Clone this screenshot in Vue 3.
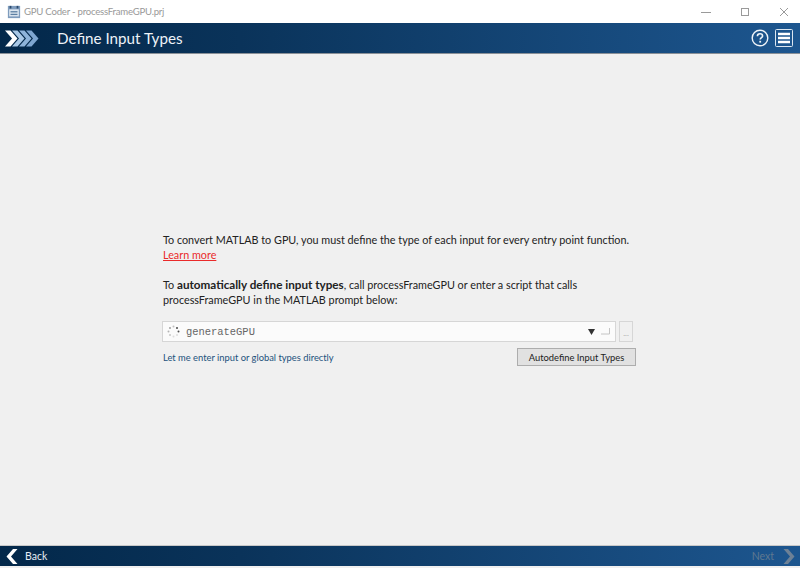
<script setup>
const logoChevrons = [
  { x: 21, fill: '#7ea6d0' },
  { x: 14, fill: '#8fb4da' },
  { x: 7, fill: '#a9c8e6' },
  { x: 0, fill: '#ffffff' },
]
const spinnerDots = [
  { x: 7.5, y: 1.5, o: 0.3 },
  { x: 11, y: 3, o: 0.9 },
  { x: 12.5, y: 6.5, o: 0.85 },
  { x: 11, y: 10, o: 0.15 },
  { x: 7.5, y: 11.5, o: 0.15 },
  { x: 4, y: 10, o: 0.25 },
  { x: 2.5, y: 6.5, o: 0.35 },
  { x: 4, y: 3, o: 0.45 },
]
</script>

<template>
  <div class="window">
    <div class="titlebar">
      <div class="title-left">
        <svg class="app-icon" width="14" height="14" viewBox="0 0 16 16">
          <rect x="1" y="1" width="14" height="14" fill="#7f9cbd" />
          <rect x="3" y="1" width="2" height="3" fill="#2c4a6e" />
          <rect x="11" y="1" width="2" height="3" fill="#2c4a6e" />
          <rect x="2.5" y="5" width="11" height="8" fill="#dfe8f1" />
          <rect x="4" y="7" width="8" height="1.5" fill="#5d7fa3" />
          <rect x="4" y="10" width="8" height="1.5" fill="#5d7fa3" />
        </svg>
        <span class="title-text">GPU Coder - processFrameGPU.prj</span>
      </div>
      <div class="win-controls">
        <svg width="10" height="10" viewBox="0 0 10 10"><path d="M0 5.5H10" stroke="#9a9a9a" /></svg>
        <svg width="10" height="10" viewBox="0 0 10 10"><rect x="1.5" y="1.5" width="7" height="7" fill="none" stroke="#9a9a9a" /></svg>
        <svg width="10" height="10" viewBox="0 0 10 10"><path d="M1 1L9 9M9 1L1 9" stroke="#9a9a9a" /></svg>
      </div>
    </div>

    <header class="banner">
      <div class="banner-left">
        <svg class="logo" width="34" height="17" viewBox="0 0 34 17">
          <path
            v-for="c in logoChevrons"
            :key="c.x"
            :transform="`translate(${c.x} 0)`"
            :fill="c.fill"
            d="M0 .5H5.5L12.5 8.5L5.5 16.5H0L7 8.5Z"
          />
        </svg>
        <h1 class="banner-title">Define Input Types</h1>
      </div>
      <div class="banner-right">
        <svg width="18" height="18" viewBox="0 0 18 18">
          <circle cx="9" cy="9" r="7.8" fill="none" stroke="#eef3f8" stroke-width="1.4" />
          <path d="M6.4 7.2C6.4 5.6 7.6 4.8 9 4.8C10.5 4.8 11.6 5.7 11.6 7C11.6 8.6 9.2 8.8 9.2 10.6" fill="none" stroke="#eef3f8" stroke-width="1.6" />
          <rect x="8.3" y="11.8" width="1.8" height="1.8" fill="#eef3f8" />
        </svg>
        <svg width="18" height="18" viewBox="0 0 18 18">
          <rect x="0.5" y="0.5" width="17" height="17" rx="1" fill="none" stroke="#dce6f0" />
          <path d="M3 5H15M3 9H15M3 13H15" stroke="#fff" stroke-width="2.4" />
        </svg>
      </div>
    </header>

    <main class="content">
      <div class="panel">
        <p class="para">
          To convert MATLAB to GPU, you must define the type of each input for every entry point function.<br />
          <a class="learn">Learn more</a>
        </p>
        <p class="para second">
          To <b>automatically define input types</b>, call processFrameGPU or enter a script that calls<br />
          processFrameGPU in the MATLAB prompt below:
        </p>
        <div class="prompt-row">
          <div class="prompt">
            <svg class="spinner" width="15" height="13" viewBox="0 0 15 13">
              <circle v-for="(d, i) in spinnerDots" :key="i" :cx="d.x" :cy="d.y" r="1" fill="#333" :opacity="d.o" />
            </svg>
            <span class="prompt-text">generateGPU</span>
            <svg class="arrow" width="7" height="6" viewBox="0 0 7 6"><path d="M0 0H7L3.5 6Z" fill="#333" /></svg>
            <svg class="enter" width="9" height="7" viewBox="0 0 9 7"><path d="M0 6H8.5V0" fill="none" stroke="#c4c4c4" /></svg>
          </div>
          <div class="browse">...</div>
        </div>
        <div class="action-row">
          <a class="manual">Let me enter input or global types directly</a>
          <button class="auto">Autodefine Input Types</button>
        </div>
      </div>
    </main>

    <footer class="footer">
      <div class="nav">
        <svg width="12" height="15" viewBox="0 0 12 15"><path d="M7 0H11.5L5 7.5L11.5 15H7L.5 7.5Z" fill="#fff" /></svg>
        <span class="back">Back</span>
      </div>
      <div class="nav">
        <span class="next">Next</span>
        <svg width="12" height="15" viewBox="0 0 12 15"><path d="M.5 0H5L11.5 7.5L5 15H.5L7 7.5Z" fill="#6d8196" /></svg>
      </div>
    </footer>
  </div>
</template>

<style>
html, body { margin: 0; background: #f0f0f0; }
</style>

<style scoped>
.window {
  width: 800px;
  height: 568px;
  display: flex;
  flex-direction: column;
  font-family: Lato, "Open Sans", sans-serif;
  background: #f0f0f0;
  overflow: hidden;
}
.titlebar {
  height: 23px;
  background: #fff;
  display: flex;
  align-items: center;
  justify-content: space-between;
  padding: 0 8px 0 7px;
}
.title-left { display: flex; align-items: center; gap: 3px; }
.title-text { font-size: 9.6px; letter-spacing: -0.23px; color: #999; }
.win-controls { display: flex; gap: 29px; align-items: center; margin-right: 3px; }
.banner {
  height: 30px;
  background: linear-gradient(90deg, #03284a 0%, #0a335a 30%, #1d568f 100%);
  display: flex;
  align-items: center;
  justify-content: space-between;
  padding: 0 7px 0 5px;
  border-bottom: 1px solid #8a9097;
}
.banner-left { display: flex; align-items: center; gap: 18px; }
.banner-title { margin: 0; font-size: 15.2px; font-weight: 400; color: #eef3f8; }
.banner-right { display: flex; align-items: center; gap: 6px; }
.content {
  flex: 1;
  display: flex;
  flex-direction: column;
  padding: 178px 0 0 163px;
  border-bottom: 1px solid #c8c8c8;
}
.panel { width: 473px; }
.para { margin: 0; font-size: 10.8px; line-height: 15px; color: #222; white-space: nowrap; }
.para b { font-size: 11.7px; line-height: 1; }
.second { margin-top: 15px; }
.learn { color: #ea2a2a; text-decoration: underline; }
.prompt-row { display: flex; gap: 3px; margin: 14px 0 0 -1px; }
.prompt {
  box-sizing: border-box;
  width: 454px;
  height: 21px;
  background: #fbfbfb;
  border: 1px solid #d6d6d6;
  display: flex;
  align-items: center;
  padding: 0 5px 0 3px;
}
.spinner { flex: none; }
.prompt-text { flex: 1; margin-left: 5px; font-family: "Liberation Mono", monospace; font-size: 10.45px; color: #666; }
.arrow { flex: none; margin-right: 3px; }
.enter { flex: none; margin-left: 3px; }
.browse {
  box-sizing: border-box;
  width: 14px;
  height: 21px;
  border: 1px solid #d6d6d6;
  font-size: 8px;
  color: #aaa;
  text-align: center;
  line-height: 22px;
}
.action-row { display: flex; align-items: center; justify-content: space-between; margin-top: 6px; }
.manual { font-size: 9.35px; color: #23527c; }
.auto {
  box-sizing: border-box;
  width: 119px;
  height: 18px;
  padding: 0;
  background: #e1e1e1;
  border: 1px solid #adadad;
  font-family: inherit;
  font-size: 9.35px;
  color: #222;
}
.footer {
  height: 20px;
  margin-bottom: 2px;
  background: linear-gradient(90deg, #03284a 0%, #0a335a 30%, #1d568f 100%);
  display: flex;
  align-items: center;
  justify-content: space-between;
  padding: 0 5px 0 6px;
}
.nav { display: flex; align-items: center; gap: 7px; }
.back { font-size: 10.5px; color: #e6edf4; }
.next { font-size: 10.5px; color: #5f7890; margin-right: 2px; }
</style>
